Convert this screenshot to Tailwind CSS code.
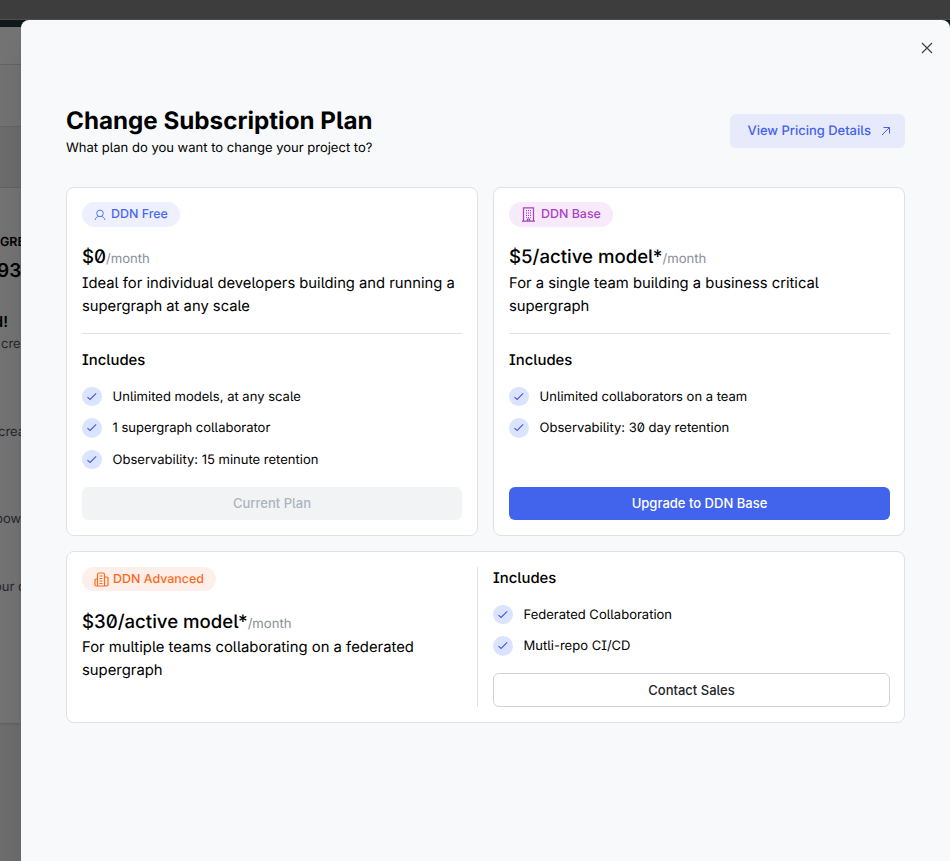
<!DOCTYPE html>
<html lang="en">
<head>
<meta charset="utf-8">
<title>Change Subscription Plan</title>
<script src="https://cdn.jsdelivr.net/npm/@tailwindcss/browser@4"></script>
</head>
<body class="relative h-[861px] w-[950px] overflow-hidden bg-[#6c6c6c] font-['Inter',sans-serif] whitespace-nowrap text-black antialiased [font-feature-settings:'zero','ss02'] [text-rendering:geometricPrecision]">
<svg class="hidden">
  <symbol id="check" viewBox="0 0 20 20"><path d="M5.600 10.300l2.700 2.500 6.200-6.200" fill="none" stroke="#4b4ff0" stroke-width="1.100"/></symbol>
</svg>

<!-- dimmed page behind the dialog -->
<div class="flex h-[861px] flex-col">
  <div class="h-5 shrink-0 border-b border-[#4a4f4f] bg-[#3d3d3d]"></div>
  <div class="h-[7px] shrink-0 bg-[#11181b]"></div>
  <div class="h-[38px] shrink-0 border-b border-[#626364] bg-[#737373]"></div>
  <div class="h-[62px] shrink-0 border-b border-[#626364] bg-[#717171]"></div>
  <div class="h-[61px] shrink-0 border-b border-[#626364] bg-[#6b6b6b]"></div>
  <div class="relative h-[535px] w-[21px] shrink-0 bg-[#727272] text-[13px] text-[#23272b] shadow">
    <span class="absolute top-[46px] left-0 text-[12.500px] font-semibold text-black">GRE</span>
    <span class="absolute top-[69px] left-[-3px] text-[19px] font-semibold text-black">93</span>
    <span class="absolute top-[123px] right-[13px] text-[15px] font-semibold text-black">d!</span>
    <span class="absolute top-[147px] left-[1px]">cre</span>
    <span class="absolute top-[235px] left-[-2px]">crea</span>
    <span class="absolute top-[322px] left-[-5px]">pow</span>
    <span class="absolute top-[390px] left-[-6px]">our d</span>
  </div>
</div>

<main class="absolute top-5 left-[21px] h-[860px] w-[929px] rounded-lg bg-[#f8f9fb] px-[45px] pt-[84px] shadow-xl">
  <button class="absolute top-[22px] right-[17px]" aria-label="Close">
    <svg class="size-3" viewBox="0 0 12 12" fill="none" stroke="#41474e" stroke-width="1.300"><path d="M1 1l10 10M11 1L1 11"/></svg>
  </button>

  <header class="flex h-[83px] items-start justify-between">
    <div>
      <h1 class="text-[24.200px] leading-[33px] font-bold">Change Subscription Plan</h1>
      <p class="text-[13.030px] leading-[22px]">What plan do you want to change your project to?</p>
    </div>
    <a class="mt-[10px] flex h-[34px] w-[175px] items-center justify-between rounded-md bg-[#e7eafa] pr-[14px] pl-[17.500px] text-[12.950px] font-medium text-[#4361ee]"><span class="pt-[2px]">View Pricing Details</span>
      <svg class="size-[10px]" viewBox="0 0 10 10" fill="none" stroke="currentColor"><path d="M1 9l7.500-7.500M2.500 1.500h6v6"/></svg>
    </a>
  </header>

  <section class="grid grid-cols-[412px_412px] gap-[15px]">
    <article class="flex h-[349px] flex-col rounded-lg border border-[#dee2e6] bg-white px-[15px] pt-[14px] pb-[15px]">
      <div class="flex h-[25px] w-[98px] shrink-0 items-center gap-[5px] rounded-full bg-[#eef0fd] pl-[12px] text-[12.450px] font-medium text-[#4b68f0]">
        <svg class="size-3" viewBox="0 0 12 12" fill="none" stroke="currentColor" stroke-width=".9"><circle cx="6" cy="4.400" r="3.300"/><path d="M1 11c.6-2.200 2-3.200 3.500-3.700M11 11c-.6-2.200-2-3.200-3.500-3.700"/></svg><span class="pt-px">DDN Free</span>
      </div>
      <div class="mt-4 h-[29px] text-[18.600px] leading-[28px] font-medium"><span>$0</span><span class="text-[13.100px] font-normal text-[#868e96]">/month</span></div>
      <p class="text-[14.770px] leading-[23px]">Ideal for individual developers building and running a<br>supergraph at any scale</p>
      <hr class="mt-[15px] border-[#dee2e6]">
      <h2 class="mt-[15px] text-[14.850px] leading-[23px] font-medium">Includes</h2>
      <ul class="mt-[14.900px] flex flex-col gap-[11px] text-[13.030px] leading-[19.500px]">
        <li class="flex gap-[11px]"><svg class="size-[19.500px] rounded-full bg-[#dbe4ff]"><use href="#check"/></svg><span class="pt-px">Unlimited models, at any scale</span></li>
        <li class="flex gap-[11px]"><svg class="size-[19.500px] rounded-full bg-[#dbe4ff]"><use href="#check"/></svg><span class="pt-px">1 supergraph collaborator</span></li>
        <li class="flex gap-[11px]"><svg class="size-[19.500px] rounded-full bg-[#dbe4ff]"><use href="#check"/></svg><span class="pt-px">Observability: 15 minute retention</span></li>
      </ul>
      <button class="mt-auto h-[33px] rounded-md bg-[#f1f3f5] text-[13.030px] font-medium text-[#adb5bd]">Current Plan</button>
    </article>

    <article class="flex h-[349px] flex-col rounded-lg border border-[#dee2e6] bg-white pt-[14px] pr-[14px] pb-[15px] pl-[15px]">
      <div class="flex h-[25px] w-[104px] shrink-0 items-center gap-[6px] rounded-full bg-[#f6eafb] pl-[13px] text-[12.450px] font-medium text-[#ae3ec9]">
        <svg class="h-[15px] w-[13px]" viewBox="0 0 13 15" fill="none" stroke="currentColor"><path d="M1.500 14V.8h10V14M0 14.200h13M5.500 14v-2h2v2" stroke-width="1.200"/><path d="M4.500 3v8M8.500 3v8M6.500 3v8" stroke-dasharray="1.200 1.200"/></svg><span class="pt-px">DDN Base</span>
      </div>
      <div class="mt-4 h-[29px] text-[18.600px] leading-[28px] font-medium"><span>$5/active model*</span><span class="text-[13.100px] font-normal text-[#868e96]">/month</span></div>
      <p class="text-[14.800px] leading-[23px]">For a single team building a business critical<br>supergraph</p>
      <hr class="mt-[15px] border-[#dee2e6]">
      <h2 class="mt-[15px] text-[14.850px] leading-[23px] font-medium">Includes</h2>
      <ul class="mt-[14.900px] flex flex-col gap-[11px] text-[13.030px] leading-[19.500px]">
        <li class="flex gap-[11px]"><svg class="size-[19.500px] rounded-full bg-[#dbe4ff]"><use href="#check"/></svg><span class="pt-px">Unlimited collaborators on a team</span></li>
        <li class="flex gap-[11px]"><svg class="size-[19.500px] rounded-full bg-[#dbe4ff]"><use href="#check"/></svg><span class="pt-px">Observability: 30 day retention</span></li>
      </ul>
      <button class="mt-auto h-[33px] rounded-md bg-[#4263eb] text-[13.030px] font-medium text-white">Upgrade to DDN Base</button>
    </article>

    <article class="col-span-2 flex h-[172px] rounded-lg border border-[#dee2e6] bg-white py-[15px] pr-[14px] pl-[15px]">
      <div class="w-[396px] border-r border-[#dee2e6]">
        <div class="flex h-[24px] w-[134px] items-center gap-[4px] rounded-full bg-[#ffefea] pl-[12px] text-[12.450px] font-medium text-[#fd6a1c]">
          <svg class="h-[15px] w-[15px]" viewBox="0 0 15 15" fill="none" stroke="currentColor" stroke-width="1.200"><path d="M3.500 14V2.500q0-1.500 1.500-1.500h4q1.500 0 1.500 1.500V14M3.500 7H2.200Q1 7 1 8.200v4.600Q1 14 2.200 14h10.600q1.200 0 1.200-1.200V6.200Q14 5 12.800 5h-2.300"/><path d="M5.500 4h3M5.500 6.500h3M5.500 9h3M5.500 11.500h3" stroke-width="1"/></svg><span class="pt-[2px]">DDN Advanced</span>
        </div>
        <div class="mt-[17px] h-[28px] text-[18.600px] leading-[28px] font-medium"><span>$30/active model*</span><span class="text-[13.100px] font-normal text-[#868e96]">/month</span></div>
        <p class="text-[14.850px] leading-[23px]">For multiple teams collaborating on a federated<br>supergraph</p>
      </div>
      <div class="flex flex-1 flex-col pl-[15px]">
        <h2 class="text-[14.850px] leading-[22px] font-medium">Includes</h2>
        <ul class="mt-[15.900px] flex flex-col gap-[11px] text-[13.030px] leading-[19.500px]">
          <li class="flex gap-[11px]"><svg class="size-[19.500px] rounded-full bg-[#dbe4ff]"><use href="#check"/></svg><span class="pt-px">Federated Collaboration</span></li>
          <li class="flex gap-[11px]"><svg class="size-[19.500px] rounded-full bg-[#dbe4ff]"><use href="#check"/></svg><span class="pt-px">Mutli-repo CI/CD</span></li>
        </ul>
        <button class="mt-auto h-[34px] rounded-md border border-[#ced4da] bg-white pt-px text-[13.030px] font-medium text-[#212529]">Contact Sales</button>
      </div>
    </article>
  </section>
</main>
</body>
</html>
